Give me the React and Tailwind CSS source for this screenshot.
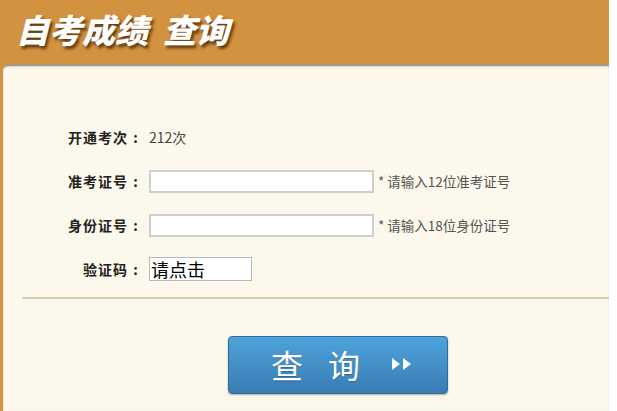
export default function App() {
  const cjk = { fontFamily: '"Noto Sans CJK SC", "Noto Sans", sans-serif' };
  const Label = ({ children }) => (
    <div className="w-[140px] flex justify-end items-center text-[14px] font-bold text-[#222]">
      <span className="tracking-[1px]">{children}</span>
      <span className="w-[15px] text-center">:</span>
    </div>
  );
  return (
    <div className="w-[617px] h-[411px] bg-white overflow-hidden" style={cjk}>
      <div className="w-[609px] h-[411px] bg-[#d3923f] flex flex-col">
        <div className="h-[64px] shrink-0 flex items-center pl-[16px] pb-[5px]">
          <h1 className="text-[33px] leading-none font-black italic text-white [text-shadow:2px_3px_3px_rgba(60,30,0,0.75)]">
            自考成绩&nbsp;&nbsp;查询
          </h1>
        </div>
        <div className="flex-1 ml-[3px] bg-[#fcf9ec] rounded-tl-[6px] border-t-2 border-[#a49a88] shadow-[inset_0_1px_2px_rgba(0,0,0,0.15)]">
          <div className="pt-[49px] flex flex-col">
            <div className="h-[44px] flex items-center">
              <Label>开通考次</Label>
              <div className="ml-[6px] text-[14px] text-[#444]">212次</div>
            </div>
            <div className="h-[44px] flex items-center">
              <Label>准考证号</Label>
              <input className="ml-[6px] w-[225px] h-[23px] bg-white border-2 border-[#cfcfcf] outline-none" />
              <div className="ml-[4px] text-[13.5px] text-[#555]">* 请输入12位准考证号</div>
            </div>
            <div className="h-[44px] flex items-center">
              <Label>身份证号</Label>
              <input className="ml-[6px] w-[225px] h-[23px] bg-white border-2 border-[#cfcfcf] outline-none" />
              <div className="ml-[4px] text-[13.5px] text-[#555]">* 请输入18位身份证号</div>
            </div>
            <div className="h-[44px] flex items-center">
              <Label>验证码</Label>
              <div className="ml-[6px] w-[103px] h-[24px] bg-white border border-[#b8b8b8] flex items-center text-[18px] leading-none text-black pl-[1px]">
                请点击
              </div>
            </div>
          </div>
          <div className="mt-[6px] ml-[19px] h-[2px] bg-[#d3cfa4]" />
          <div className="mt-[37px] ml-[225px]">
            <button className="w-[220px] h-[58px] rounded-[4px] border border-[#2f6c9e] bg-gradient-to-b from-[#4ea3db] to-[#397cb3] shadow-[0_1px_2px_rgba(0,0,0,0.3)] flex items-center pl-[42px] pb-[2px] text-white">
              <span className="text-[32px] leading-none [text-shadow:0_1px_1px_rgba(0,0,0,0.25)]">查</span>
              <span className="text-[32px] leading-none ml-[25px] [text-shadow:0_1px_1px_rgba(0,0,0,0.25)]">询</span>
              <svg className="ml-[31px]" width="22" height="12" viewBox="0 0 22 12">
                <polygon points="1,0 9,6 1,12" fill="white" />
                <polygon points="12,0 20,6 12,12" fill="white" />
              </svg>
            </button>
          </div>
        </div>
      </div>
    </div>
  );
}
